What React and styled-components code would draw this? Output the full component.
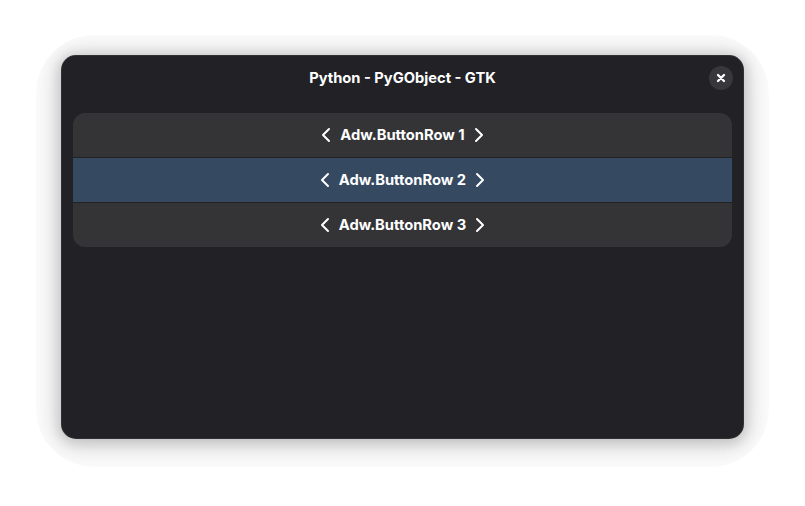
import React from 'react';
import styled, { createGlobalStyle } from 'styled-components';

const GlobalStyle = createGlobalStyle`
  * { box-sizing: border-box; }
  body { margin: 0; background: #fff; font-family: Inter, sans-serif; }
`;

const Desktop = styled.main`
  height: 506px;
  padding: 35px 36px 39px;
  overflow: hidden;
`;

const Halo = styled.div`
  padding: 20px 25px 28px;
  border-radius: 58px;
  overflow: hidden;
  background: rgba(0, 0, 0, 0.01);
`;

const Window = styled.section`
  height: 384px;
  border-radius: 15px;
  background: #222226;
  color: #fff;
  box-shadow:
    inset 0 0 0 1px rgba(255, 255, 255, 0.07),
    0 2px 12px 3px rgba(0, 0, 0, 0.13),
    0 3px 26px 6px rgba(0, 0, 0, 0.14);
`;

const HeaderBar = styled.header`
  height: 46px;
  padding: 0 11px;
  display: grid;
  grid-template-columns: 24px 1fr 24px;
  align-items: center;
`;

const Title = styled.h1`
  grid-column: 2;
  margin: 0;
  text-align: center;
  font-size: 14.69px;
  font-weight: 700;
  line-height: 20px;
`;

const CloseButton = styled.button`
  width: 24px;
  height: 24px;
  padding: 0;
  border: 0;
  border-radius: 50%;
  display: grid;
  place-items: center;
  background: #38383c;
  color: #fff;
`;

const ButtonList = styled.div`
  margin: 12px 12px 0;
  border-radius: 12px;
  overflow: hidden;
  background: #222225;
  display: grid;
  gap: 1px;
`;

const ButtonRow = styled.button`
  height: 44px;
  padding: 0;
  border: 0;
  display: flex;
  align-items: center;
  justify-content: center;
  gap: 6px;
  background: ${({ $suggested }) => ($suggested ? '#354961' : '#343436')};
  color: #fff;
  font: 700 14.75px/20px Inter, sans-serif;
`;

const Icon = styled.svg`
  width: 16px;
  height: 16px;
  fill: none;
  stroke: currentColor;
  stroke-width: ${({ $weight = 2 }) => $weight};
  stroke-linecap: round;
  stroke-linejoin: round;
`;

const rows = [
  { label: 'Adw.ButtonRow 1' },
  { label: 'Adw.ButtonRow 2', suggested: true },
  { label: 'Adw.ButtonRow 3' },
];

export default function App() {
  return (
    <Desktop>
      <GlobalStyle />
      <Halo>
        <Window>
          <HeaderBar>
            <Title>Python - PyGObject - GTK</Title>
            <CloseButton aria-label="Close">
              <Icon $weight={2.3} viewBox="0 0 16 16"><path d="m5 5 6 6M11 5l-6 6" /></Icon>
            </CloseButton>
          </HeaderBar>
          <ButtonList>
            {rows.map(({ label, suggested }) => (
              <ButtonRow key={label} $suggested={suggested}>
                <Icon viewBox="0 0 16 16"><path d="M11 2 5 8l6 6" /></Icon>
                <span>{label}</span>
                <Icon viewBox="0 0 16 16"><path d="m5 2 6 6-6 6" /></Icon>
              </ButtonRow>
            ))}
          </ButtonList>
        </Window>
      </Halo>
    </Desktop>
  );
}
